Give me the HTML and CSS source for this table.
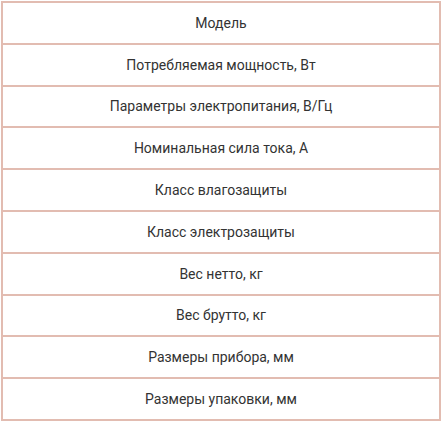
FILE: index.html
```html
<!DOCTYPE html>
<html lang="ru">
<head>
<meta charset="utf-8">
<link rel="stylesheet" href="styles.css">
</head>
<body>
<table class="spec">
  <tbody>
    <tr><td>Модель</td></tr>
    <tr><td>Потребляемая мощность, Вт</td></tr>
    <tr><td>Параметры электропитания, В/Гц</td></tr>
    <tr><td>Номинальная сила тока, А</td></tr>
    <tr><td>Класс влагозащиты</td></tr>
    <tr><td>Класс электрозащиты</td></tr>
    <tr><td>Вес нетто, кг</td></tr>
    <tr><td>Вес брутто, кг</td></tr>
    <tr><td>Размеры прибора, мм</td></tr>
    <tr><td>Размеры упаковки, мм</td></tr>
  </tbody>
</table>
</body>
</html>
```
FILE: styles.css
```css
html, body {
  margin: 0;
  padding: 0;
  background: #ffffff;
}
body {
  padding: 1px 0 0 1px;
}
.spec {
  width: 440px;
  border-collapse: separate;
  border-spacing: 0;
  border-top: 2px solid #e2bcb1;
  border-left: 2px solid #e2bcb1;
  font-family: Roboto, "Liberation Sans", sans-serif;
  font-size: 14px;
  color: #333333;
}
.spec td {
  height: 41.8px;
  padding: 0 8px;
  box-sizing: border-box;
  text-align: center;
  vertical-align: middle;
  border-right: 2px solid #e2bcb1;
  border-bottom: 2px solid #e2bcb1;
}
```
